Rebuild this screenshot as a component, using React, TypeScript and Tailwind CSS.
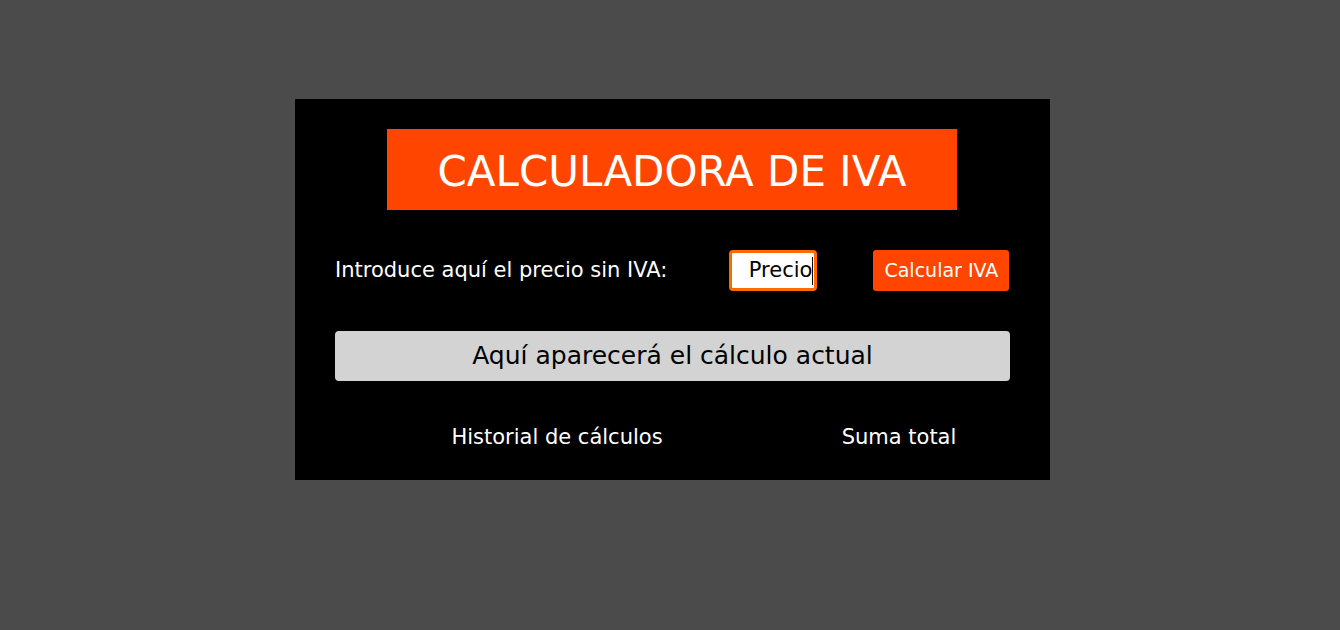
export default function App() {
  const font = { fontFamily: '"DejaVu Sans", Verdana, sans-serif' };
  return (
    <div className="h-[630px] w-full overflow-hidden bg-[#4b4b4b] pt-[99px]" style={font}>
      <div className="ml-[295px] flex h-[381px] w-[755px] flex-col bg-black px-[40px] pt-[30px]">
        <div className="ml-[52px] flex h-[81px] w-[570px] items-center justify-center bg-[#ff4500] pt-[3px] text-[42px] text-white">
          CALCULADORA DE IVA
        </div>

        <div className="mt-[40px] flex h-[41px] items-center">
          <span className="text-[21px] text-white">Introduce aquí el precio sin IVA:</span>
          <div className="ml-[62px] flex h-[41px] w-[88px] items-center justify-end rounded-[4px] border-[3px] border-[#ff6a00] bg-white pr-[1px] text-[21px] text-black">
            <span>Precio</span>
            <span className="h-[28px] w-px bg-black" />
          </div>
          <button
            type="button"
            className="ml-[56px] h-[41px] w-[136px] rounded-[3px] bg-[#ff4500] text-[19px] text-white"
          >
            Calcular IVA
          </button>
        </div>

        <div className="mt-[40px] flex h-[50px] items-center justify-center rounded-[4px] bg-[#d3d3d3] text-[25px] text-black">
          Aquí aparecerá el cálculo actual
        </div>

        <div className="mt-[41px] flex text-[21px] text-white">
          <div className="w-[444px] shrink-0 text-center">Historial de cálculos</div>
          <div className="ml-[10px] w-[220px] shrink-0 text-center">Suma total</div>
        </div>
      </div>
    </div>
  );
}
